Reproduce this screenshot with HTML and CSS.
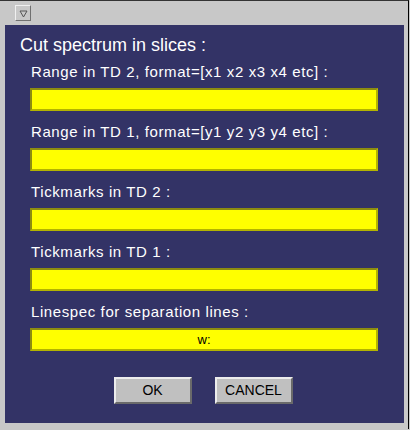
FILE: index.html
```html
<!DOCTYPE html>
<html>
<head>
<meta charset="utf-8">
<link rel="stylesheet" href="styles.css">
</head>
<body>
<div class="frame">
  <div class="titlebar">
    <div class="menu-btn"><svg width="11" height="11" viewBox="0 0 11 11"><path d="M2 3 L9 3 L5.5 9 Z" fill="none" stroke="#555" stroke-width="1"/></svg></div>
  </div>
  <div class="panel">
    <div class="heading">Cut spectrum in slices :</div>
    <div class="fields">
      <div class="field">
        <div class="label">Range in TD 2, format=[x1 x2 x3 x4 etc] :</div>
        <div class="input"></div>
      </div>
      <div class="field">
        <div class="label">Range in TD 1, format=[y1 y2 y3 y4 etc] :</div>
        <div class="input"></div>
      </div>
      <div class="field">
        <div class="label">Tickmarks in TD 2 :</div>
        <div class="input"></div>
      </div>
      <div class="field">
        <div class="label">Tickmarks in TD 1 :</div>
        <div class="input"></div>
      </div>
      <div class="field">
        <div class="label">Linespec for separation lines :</div>
        <div class="input">w:</div>
      </div>
    </div>
    <div class="buttons">
      <div class="btn">OK</div>
      <div class="btn">CANCEL</div>
    </div>
  </div>
</div>
</body>
</html>
```
FILE: styles.css
```css
html, body {
  margin: 0;
  padding: 0;
  background: #c8c8c8;
}
.frame {
  width: 409px;
  height: 429px;
  background: #c8c8c8;
  border-top: 1px solid #333;
  border-right: 1px solid #000;
  display: flex;
  flex-direction: column;
  padding-left: 5px;
  box-sizing: border-box;
  font-family: "Liberation Sans", Arial, sans-serif;
}
.titlebar {
  height: 24px;
  display: flex;
  align-items: flex-start;
  padding-top: 4px;
  padding-left: 10px;
  box-sizing: border-box;
}
.menu-btn {
  width: 14px;
  height: 14px;
  border-top: 1px solid #f0f0f0;
  border-left: 1px solid #f0f0f0;
  border-right: 1px solid #707070;
  border-bottom: 1px solid #707070;
  display: flex;
  align-items: center;
  justify-content: center;
}
.panel {
  width: 399px;
  height: 398px;
  background: #333366;
  box-sizing: border-box;
  padding-top: 10px;
  display: flex;
  flex-direction: column;
}
.heading {
  color: #fff;
  font-size: 18px;
  line-height: 21px;
  padding-left: 15px;
}
.fields {
  padding-left: 25px;
  margin-top: 7px;
  display: flex;
  flex-direction: column;
  gap: 12px;
}
.field {
  display: flex;
  flex-direction: column;
  gap: 8px;
}
.label {
  color: #fff;
  font-size: 15px;
  line-height: 17px;
  letter-spacing: 0.6px;
  padding-left: 1px;
}
.input {
  width: 348px;
  height: 23px;
  box-sizing: border-box;
  background: #ffff00;
  border: 2px solid;
  border-color: #8c8c10 #b4b400 #b4b400 #8c8c10;
  color: #000;
  font-size: 13px;
  line-height: 19px;
  text-align: center;
}
.buttons {
  display: flex;
  justify-content: center;
  gap: 23px;
  margin-top: 26px;
  padding-right: 3px;
}
.btn {
  width: 78px;
  height: 27px;
  box-sizing: border-box;
  background: #c0c0c0;
  border: 2px solid;
  border-color: #ececec #6a6a6a #6a6a6a #ececec;
  color: #000;
  font-size: 14px;
  line-height: 23px;
  text-align: center;
}
```
